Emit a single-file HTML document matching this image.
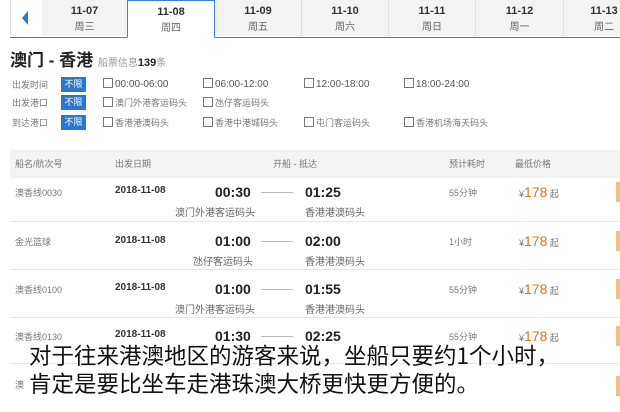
<!DOCTYPE html><html><head><meta charset="utf-8"><style>
body{margin:0;width:620px;height:412px;overflow:hidden;background:#fff;font-family:"Liberation Sans","Noto Sans CJK SC",sans-serif;position:relative;color:#333}
.a{position:absolute;white-space:nowrap}
.tabs{position:absolute;left:10px;top:0;width:620px;height:37px;border-bottom:1px solid #3b7fd6}
.tab{position:absolute;top:0;height:36px;background:#f3f3f3;border-right:1px solid #e0e0e0;text-align:center;font-size:11px}
.tab b{display:block;margin-top:5px;font-size:11px;color:#333}
.tab span{display:block;font-size:10px;color:#666;margin-top:1px}
.btn{position:absolute;left:61px;width:25px;height:15px;background:#2a78d0;color:#fff;font-size:9px;text-align:center;line-height:15px}
.cb{display:inline-block;width:8px;height:8px;border:1px solid #777;margin-right:2px;vertical-align:-1px}
.f{font-size:10px;color:#555}
.fl{font-size:9px;color:#777}
.sep{position:absolute;left:10px;width:610px;height:1px;background:#e6e6e6}
.t{font-size:14px;font-weight:bold;color:#222}
.s{font-size:10px;color:#666}
.p{color:#e07020;font-size:14px}
.sub{font-size:22.5px;color:#111;text-shadow:0 0 2px #fff,0 0 2px #fff,0 0 3px #fff;font-family:"Noto Sans CJK SC",sans-serif}
.bar{position:absolute;left:616px;width:4px;height:20px;background:#f0c080}
</style></head><body>
<div class="tabs">
<div class="tab" style="left:0;width:31px;background:#fff;border-left:1px solid #ddd"><div style="position:absolute;left:11px;top:11px;width:0;height:0;border-top:7px solid transparent;border-bottom:7px solid transparent;border-right:6px solid #2a78d0"></div></div>
<div class="tab" style="left:32px;width:85px"><b>11-07</b><span>周三</span></div>
<div class="tab" style="left:117px;width:86px;background:#fff;border:1px solid #3b7fd6;border-bottom:1px solid #fff;border-top:2px solid #3b7fd6;height:36px;top:-1px"><b>11-08</b><span>周四</span></div>
<div class="tab" style="left:205px;width:86px"><b>11-09</b><span>周五</span></div>
<div class="tab" style="left:292px;width:86px"><b>11-10</b><span>周六</span></div>
<div class="tab" style="left:379px;width:86px"><b>11-11</b><span>周日</span></div>
<div class="tab" style="left:466px;width:87px"><b>11-12</b><span>周一</span></div>
<div class="tab" style="left:554px;width:80px"><b>11-13</b><span>周二</span></div>
</div>
<div class="a" style="left:10px;top:46px;font-size:17px;font-weight:bold;color:#222">澳门 - 香港 <span style="font-size:10px;font-weight:normal;color:#999">船票信息<b style="color:#222;font-size:11px">139</b>条</span></div>
<div class="a fl" style="left:12px;top:78px">出发时间</div><div class="btn" style="top:77px">不限</div>
<div class="a f" style="left:103px;top:78px"><i class="cb"></i>00:00-06:00</div>
<div class="a f" style="left:203px;top:78px"><i class="cb"></i>06:00-12:00</div>
<div class="a f" style="left:304px;top:78px"><i class="cb"></i>12:00-18:00</div>
<div class="a f" style="left:404px;top:78px"><i class="cb"></i>18:00-24:00</div>
<div class="a fl" style="left:12px;top:96px">出发港口</div><div class="btn" style="top:95px">不限</div>
<div class="a fl" style="left:103px;top:96px"><i class="cb"></i>澳门外港客运码头</div>
<div class="a fl" style="left:203px;top:96px"><i class="cb"></i>氹仔客运码头</div>
<div class="a fl" style="left:12px;top:116px">到达港口</div><div class="btn" style="top:115px">不限</div>
<div class="a fl" style="left:103px;top:116px"><i class="cb"></i>香港港澳码头</div>
<div class="a fl" style="left:203px;top:116px"><i class="cb"></i>香港中港城码头</div>
<div class="a fl" style="left:304px;top:116px"><i class="cb"></i>屯门客运码头</div>
<div class="a fl" style="left:404px;top:116px"><i class="cb"></i>香港机场海天码头</div>
<div class="a" style="left:10px;top:150px;width:610px;height:28px;background:#f3f3f3"></div>
<div class="a fl" style="left:15px;top:157px">船名/航次号</div>
<div class="a fl" style="left:115px;top:157px">出发日期</div>
<div class="a fl" style="left:273px;top:157px">开船 - 抵达</div>
<div class="a fl" style="left:449px;top:157px">预计耗时</div>
<div class="a fl" style="left:515px;top:157px">最低价格</div>

<div class="a fl" style="left:15px;top:186px">澳香线0030</div><div class="a" style="left:115px;top:185px;font-size:10px;font-weight:bold">2018-11-08</div>
<div class="a t" style="left:215px;top:184px">00:30</div><div class="a t" style="left:305px;top:184px">01:25</div>
<div class="a" style="left:261px;top:192px;width:32px;height:1px;background:#bbb"></div>
<div class="a s" style="left:175px;top:204px">澳门外港客运码头</div><div class="a s" style="left:305px;top:204px">香港港澳码头</div>
<div class="a fl" style="left:449px;top:186px">55分钟</div><div class="a fl" style="left:519px;top:184px">¥<span class="p">178</span> 起</div><div class="bar" style="top:182px"></div>
<div class="sep" style="top:221px"></div>
<div class="a fl" style="left:15px;top:235px">金光篮球</div><div class="a" style="left:115px;top:235px;font-size:10px;font-weight:bold">2018-11-08</div>
<div class="a t" style="left:215px;top:233px">01:00</div><div class="a t" style="left:305px;top:233px">02:00</div>
<div class="a" style="left:261px;top:241px;width:32px;height:1px;background:#bbb"></div>
<div class="a s" style="left:193px;top:253px">氹仔客运码头</div><div class="a s" style="left:305px;top:253px">香港港澳码头</div>
<div class="a fl" style="left:449px;top:235px">1小时</div><div class="a fl" style="left:519px;top:233px">¥<span class="p">178</span> 起</div><div class="bar" style="top:231px"></div>
<div class="sep" style="top:269px"></div>
<div class="a fl" style="left:15px;top:283px">澳香线0100</div><div class="a" style="left:115px;top:282px;font-size:10px;font-weight:bold">2018-11-08</div>
<div class="a t" style="left:215px;top:281px">01:00</div><div class="a t" style="left:305px;top:281px">01:55</div>
<div class="a" style="left:261px;top:289px;width:32px;height:1px;background:#bbb"></div>
<div class="a s" style="left:175px;top:301px">澳门外港客运码头</div><div class="a s" style="left:305px;top:301px">香港港澳码头</div>
<div class="a fl" style="left:449px;top:283px">55分钟</div><div class="a fl" style="left:519px;top:281px">¥<span class="p">178</span> 起</div><div class="bar" style="top:279px"></div>
<div class="sep" style="top:317px"></div>
<div class="a fl" style="left:15px;top:330px">澳香线0130</div><div class="a" style="left:115px;top:329px;font-size:10px;font-weight:bold">2018-11-08</div>
<div class="a t" style="left:215px;top:328px">01:30</div><div class="a t" style="left:305px;top:328px">02:25</div>
<div class="a" style="left:261px;top:336px;width:32px;height:1px;background:#bbb"></div>
<div class="a fl" style="left:449px;top:330px">55分钟</div><div class="a fl" style="left:519px;top:328px">¥<span class="p">178</span> 起</div><div class="bar" style="top:326px"></div>
<div class="sep" style="top:363px"></div><div class="bar" style="top:376px"></div>
<div class="a fl" style="left:15px;top:378px">澳</div>
<div class="a sub" style="left:29px;top:339px">对于往来港澳地区的游客来说，坐船只要约1个小时，</div>
<div class="a sub" style="left:29px;top:367px">肯定是要比坐车走港珠澳大桥更快更方便的。</div>
</body></html>
